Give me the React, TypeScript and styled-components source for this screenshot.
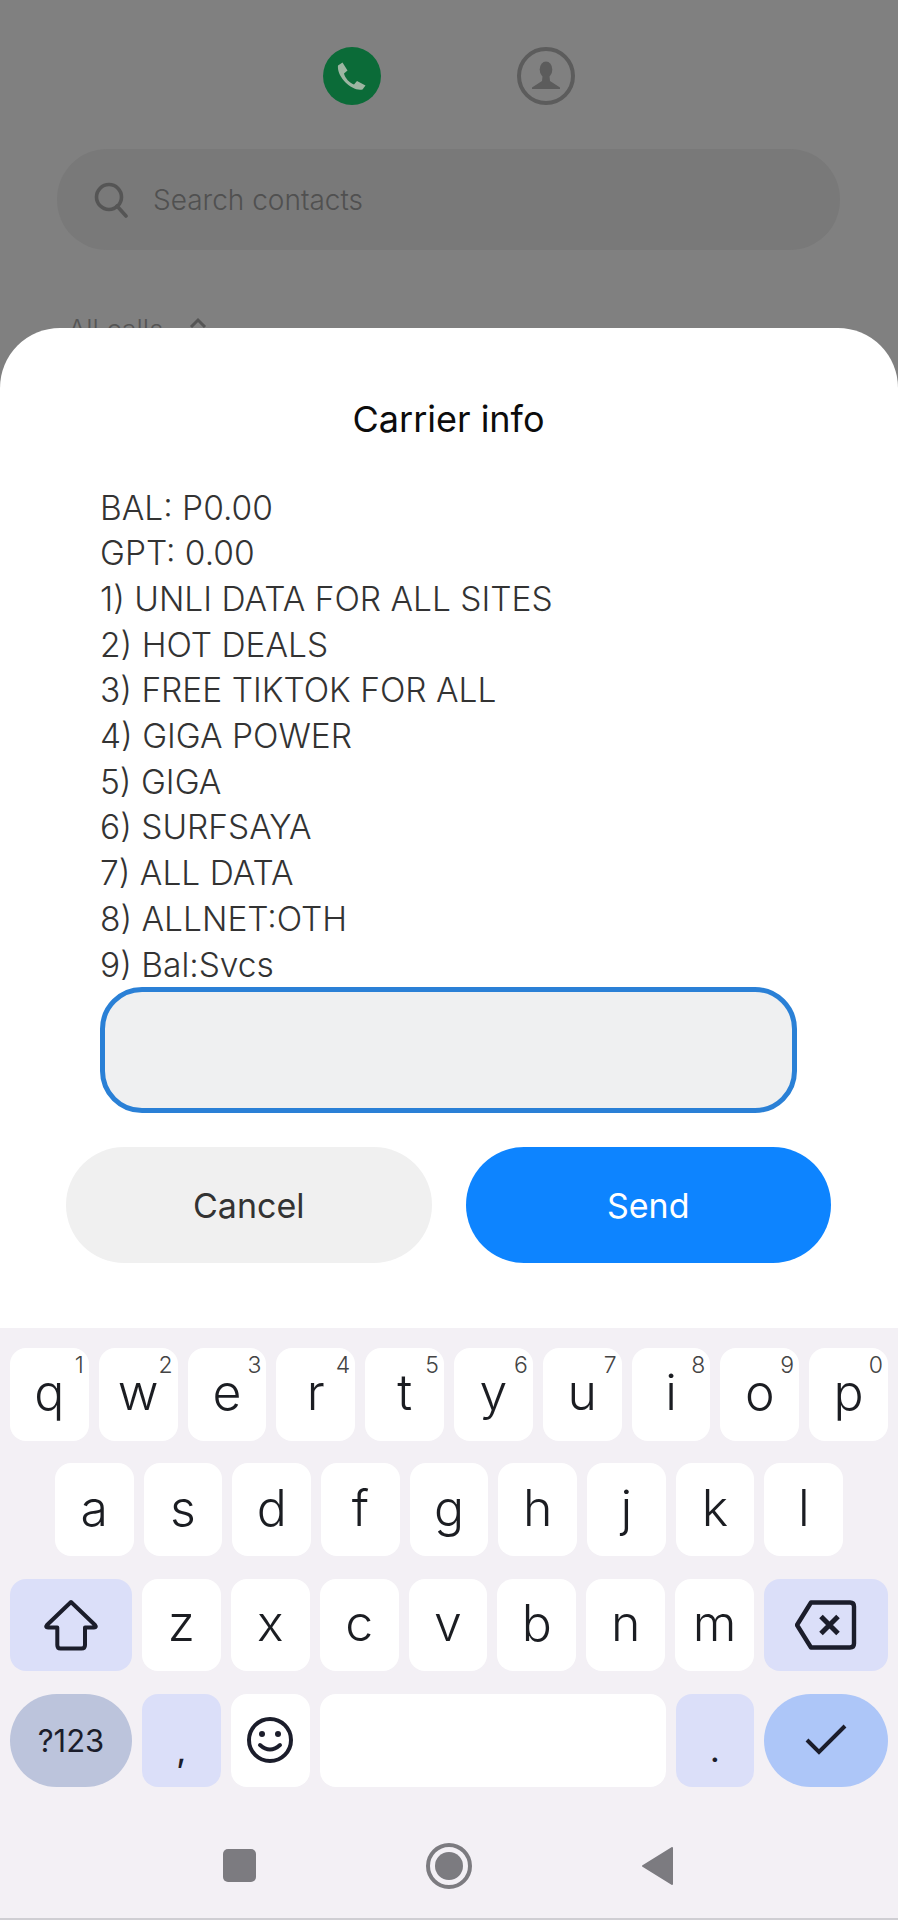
import React from "react";
import styled, { createGlobalStyle } from "styled-components";

const GlobalStyle = createGlobalStyle`
  html, body {
    margin: 0;
    padding: 0;
    background: #808080;
  }
  * {
    box-sizing: border-box;
  }
`;

const FONT = `Inter, "Liberation Sans", sans-serif`;

const LINES = [
  "BAL: P0.00",
  "GPT: 0.00",
  "1) UNLI DATA FOR ALL SITES",
  "2) HOT DEALS",
  "3) FREE TIKTOK FOR ALL",
  "4) GIGA POWER",
  "5) GIGA",
  "6) SURFSAYA",
  "7) ALL DATA",
  "8) ALLNET:OTH",
  "9) Bal:Svcs",
];

const ROW_ONE = [
  ["q", "1"],
  ["w", "2"],
  ["e", "3"],
  ["r", "4"],
  ["t", "5"],
  ["y", "6"],
  ["u", "7"],
  ["i", "8"],
  ["o", "9"],
  ["p", "0"],
];
const ROW_TWO = ["a", "s", "d", "f", "g", "h", "j", "k", "l"];
const ROW_THREE = ["z", "x", "c", "v", "b", "n", "m"];

const App = () => {
  return (
    <>
      <GlobalStyle />
      <Screen>
        <Backdrop>
          <TabBar>
            <PhoneTab>
              <svg width="30" height="30" viewBox="-15 -15 30 30">
                <path
                  d="M-14 -10.5 L-9.5 -13.5 L-4.5 -5.5 L-8 -2.5 C-7 2 -2.5 7 2 8.5 L5 5 L13.5 9.5 L10.5 13.5 C0 16 -15.5 1 -14 -10.5 Z"
                  fill="#9db5a2"
                />
              </svg>
            </PhoneTab>
            <ContactTab>
              <svg width="40" height="40" viewBox="0 0 40 40">
                <ellipse cx="20" cy="13.5" rx="6.3" ry="8" fill="#5c5c5c" />
                <path d="M16.5 20 L23.5 20 L24 25 L34 31.5 L34 33 L6 33 L6 31.5 L16 25 Z" fill="#5c5c5c" />
              </svg>
            </ContactTab>
          </TabBar>
          <SearchBar>
            <svg width="36" height="36" viewBox="0 0 36 36" fill="none">
              <circle cx="16" cy="15" r="12.5" stroke="#555" strokeWidth="3.6" />
              <path d="M24 24 L33 34" stroke="#555" strokeWidth="3.6" strokeLinecap="round" />
            </svg>
            <SearchText>Search contacts</SearchText>
          </SearchBar>
          <FilterRow>
            <FilterLabel>All calls</FilterLabel>
            <FilterChevron width="18" height="12" viewBox="0 0 18 12" fill="none">
              <path d="M2 10 L9 3 L16 10" stroke="#555" strokeWidth="3" />
            </FilterChevron>
          </FilterRow>
        </Backdrop>

        <Sheet>
          <Title>Carrier info</Title>
          <Message>
            {LINES.map((line) => (
              <MessageLine key={line}>{line}</MessageLine>
            ))}
          </Message>
          <ReplyInput readOnly aria-label="Reply" />
          <Actions>
            <ActionButton>Cancel</ActionButton>
            <ActionButton $primary>Send</ActionButton>
          </Actions>
        </Sheet>

        <Keyboard>
          <KeyRow>
            {ROW_ONE.map(([letter, hint]) => (
              <Key key={letter}>
                {letter}
                <Hint>{hint}</Hint>
              </Key>
            ))}
          </KeyRow>
          <KeyRow $inset>
            {ROW_TWO.map((letter) => (
              <Key key={letter}>{letter}</Key>
            ))}
          </KeyRow>
          <KeyRow>
            <WideKey $tone="soft">
              <svg width="56" height="52" viewBox="-3 -2 56 52" fill="none">
                <path
                  d="M25 1 L49 24 Q51 26.5 48 26.5 L39 26.5 L39 44 Q39 47.5 35.5 47.5 L14.5 47.5 Q11.3 47.5 11.3 44 L11.3 26.5 L2 26.5 Q-1 26.5 1 24 Z"
                  stroke="#1b1d2b"
                  strokeWidth="4"
                  strokeLinejoin="round"
                />
              </svg>
            </WideKey>
            {ROW_THREE.map((letter) => (
              <Key key={letter}>{letter}</Key>
            ))}
            <WideKey $tone="soft" $end>
              <svg width="62" height="50" viewBox="-2 -2.5 62 50" fill="none">
                <path
                  d="M14 0 L53 0 Q57 0 57 4 L57 41 Q57 45 53 45 L14 45 L0 22.5 Z"
                  stroke="#1b1d2b"
                  strokeWidth="4.4"
                  strokeLinejoin="round"
                />
                <path d="M24 14 L41 31 M41 14 L24 31" stroke="#1b1d2b" strokeWidth="5" />
              </svg>
            </WideKey>
          </KeyRow>
          <KeyRow>
            <WideKey $tone="mode">?123</WideKey>
            <SymbolKey $tone="soft">,</SymbolKey>
            <IconKey>
              <svg width="48" height="48" viewBox="0 0 48 48" fill="none">
                <circle cx="24" cy="24" r="21" stroke="#1b1d2b" strokeWidth="4" />
                <circle cx="16" cy="18" r="3" fill="#1b1d2b" />
                <circle cx="32" cy="18" r="3" fill="#1b1d2b" />
                <path d="M14 29 Q24 38 34 29" stroke="#1b1d2b" strokeWidth="4" strokeLinecap="round" />
              </svg>
            </IconKey>
            <SpaceKey />
            <SymbolKey $tone="soft">.</SymbolKey>
            <WideKey $tone="enter" $end>
              <svg width="44" height="34" viewBox="0 0 44 34" fill="none">
                <path d="M3 17 L15 29 L41 3" stroke="#1b1d2b" strokeWidth="4" />
              </svg>
            </WideKey>
          </KeyRow>
          <NavBar>
            <NavSquare />
            <NavHome>
              <NavDot />
            </NavHome>
            <svg width="31" height="38" viewBox="0 0 31 38">
              <path d="M1 19 L30 1 L30 37 Z" fill="#7c7b80" stroke="#7c7b80" strokeWidth="2" strokeLinejoin="round" />
            </svg>
          </NavBar>
        </Keyboard>
      </Screen>
    </>
  );
};

export default App;

const Screen = styled.div`
  width: 898px;
  height: 1920px;
  display: flex;
  flex-direction: column;
  overflow: hidden;
  background: #808080;
  font-family: ${FONT};
`;

const Backdrop = styled.section`
  height: 328px;
  flex: none;
  padding: 47px 58px 0 57px;
  overflow: hidden;
`;

const TabBar = styled.div`
  display: flex;
  justify-content: center;
  gap: 136px;
`;

const PhoneTab = styled.div`
  width: 58px;
  height: 58px;
  border-radius: 50%;
  background: #0b6b38;
  display: flex;
  align-items: center;
  justify-content: center;
`;

const ContactTab = styled.div`
  width: 58px;
  height: 58px;
  border-radius: 50%;
  border: 4px solid #5c5c5c;
  display: flex;
  align-items: center;
  justify-content: center;
`;

const SearchBar = styled.div`
  margin-top: 44px;
  height: 101px;
  border-radius: 50px;
  background: #797979;
  display: flex;
  align-items: center;
  gap: 24px;
  padding-left: 36px;
`;

const SearchText = styled.span`
  font-size: 28px;
  font-weight: 300;
  color: #505050;
`;

const FilterRow = styled.div`
  margin-top: 63px;
  margin-left: 11px;
  display: flex;
  align-items: flex-start;
  gap: 26px;
`;

const FilterLabel = styled.span`
  font-size: 27px;
  line-height: 34px;
  font-weight: 300;
  color: #555555;
`;

const FilterChevron = styled.svg`
  margin-top: 4px;
`;

const Sheet = styled.section`
  flex: 1;
  background: #ffffff;
  border-radius: 60px 60px 0 0;
  padding: 68px 67px 0 66px;
  display: flex;
  flex-direction: column;
`;

const Title = styled.h1`
  margin: 0;
  font-size: 36px;
  line-height: 46px;
  font-weight: 400;
  color: #0c0c0c;
  text-align: center;
`;

const Message = styled.div`
  margin: 43.5px 0 -1px 34px;
  color: #333333;
`;

const MessageLine = styled.div`
  font-size: 33.5px;
  line-height: 45.7px;
  font-weight: 300;
  white-space: nowrap;
`;

const ReplyInput = styled.input`
  display: block;
  width: 697px;
  height: 126px;
  margin: 0 0 0 34px;
  border: 5px solid #2a80d6;
  border-radius: 42px;
  background: #eff0f1;
  outline: none;
`;

const Actions = styled.div`
  margin-top: 34px;
  display: flex;
  gap: 34px;
`;

const ActionButton = styled.button<{ $primary?: boolean }>`
  flex: 1;
  height: 116px;
  border: none;
  border-radius: 58px;
  font-family: ${FONT};
  font-size: 34px;
  font-weight: 400;
  background: ${(p) => (p.$primary ? "#0d84ff" : "#f0f0f0")};
  color: ${(p) => (p.$primary ? "#ffffff" : "#333333")};
`;

const Keyboard = styled.section`
  height: 592px;
  flex: none;
  padding: 20px 10px 0;
  background: #f3f0f5;
  border-bottom: 2px solid #cfced3;
  display: flex;
  flex-direction: column;
  gap: 22.8px;
`;

const KeyRow = styled.div<{ $inset?: boolean }>`
  height: 92.6px;
  flex: none;
  display: flex;
  gap: 10px;
  padding: 0 ${(p) => (p.$inset ? "45px" : "0")};
`;

const toneColor = (tone?: string) => {
  if (tone === "soft") return "#dbdff9";
  if (tone === "mode") return "#bcc4dc";
  if (tone === "enter") return "#adc6f8";
  return "#ffffff";
};

const Key = styled.div`
  position: relative;
  flex: 1 1 0;
  min-width: 0;
  border-radius: 16px;
  background: #ffffff;
  color: #1b1d22;
  display: flex;
  align-items: center;
  justify-content: center;
  padding-bottom: 4px;
  font-size: 50px;
  font-weight: 350;
  line-height: 1;
`;

const IconKey = styled(Key)`
  padding-bottom: 0;
`;

const Hint = styled.span`
  position: absolute;
  top: 4px;
  right: 5px;
  font-size: 23px;
  font-weight: 300;
  line-height: 26px;
  color: #444444;
`;

const WideKey = styled.div<{ $tone?: string; $end?: boolean }>`
  width: ${(p) => (p.$end ? "124px" : "122px")};
  flex: none;
  border-radius: ${(p) => (p.$tone === "soft" ? "16px" : "47px")};
  background: ${(p) => toneColor(p.$tone)};
  color: #1b1d2b;
  display: flex;
  align-items: center;
  justify-content: center;
  font-size: 31px;
  font-weight: 400;
`;

const SymbolKey = styled.div<{ $tone?: string }>`
  width: 78.5px;
  flex: none;
  border-radius: 16px;
  background: ${(p) => toneColor(p.$tone)};
  color: #1b1d2b;
  display: flex;
  justify-content: center;
  align-items: flex-end;
  padding-bottom: 20px;
  font-size: 32px;
  line-height: 32px;
  font-weight: 500;
`;

const SpaceKey = styled.div`
  width: 346px;
  flex: none;
  border-radius: 16px;
  background: #ffffff;
`;

const NavBar = styled.nav`
  margin-top: 33px;
  padding-right: 3px;
  display: flex;
  justify-content: center;
  align-items: center;
  gap: 170px;
`;

const NavSquare = styled.div`
  width: 33px;
  height: 33px;
  border-radius: 5px;
  background: #7c7b80;
`;

const NavHome = styled.div`
  width: 46px;
  height: 46px;
  border-radius: 50%;
  border: 4px solid #7c7b80;
  display: flex;
  align-items: center;
  justify-content: center;
`;

const NavDot = styled.div`
  width: 28px;
  height: 28px;
  border-radius: 50%;
  background: #7c7b80;
`;
